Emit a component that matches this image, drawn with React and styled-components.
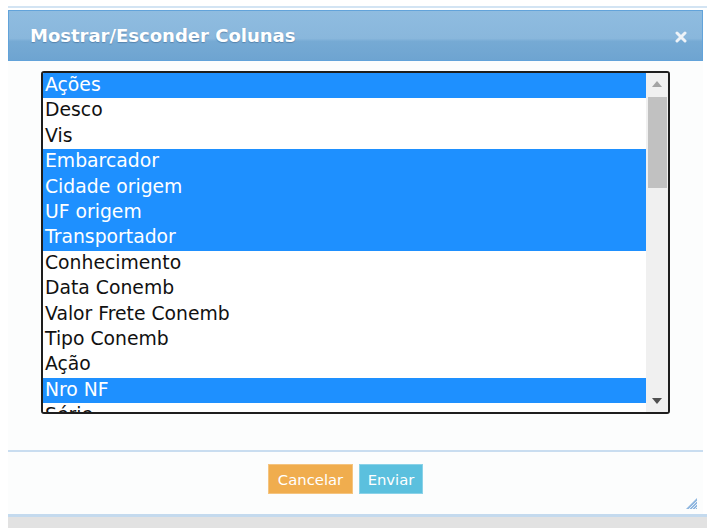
import React from "react";
import styled, { createGlobalStyle } from "styled-components";

const Global = createGlobalStyle`
  html, body { margin: 0; padding: 0; background: #ffffff; }
  body { font-family: "DejaVu Sans", Verdana, sans-serif; }
`;

const Page = styled.div`
  padding: 6px 0 0 8px;
  width: 700px;
`;

const Dialog = styled.div`
  display: flex;
  flex-direction: column;
  width: 699px;
`;

const TopLine = styled.div`
  height: 2px;
  background: #d3e4f3;
  margin-bottom: 2px;
`;

const TitleBar = styled.div`
  display: flex;
  align-items: center;
  justify-content: space-between;
  box-sizing: border-box;
  width: 695px;
  height: 51px;
  padding: 0 15px 0 21px;
  border: 1px solid #62a3da;
  background: linear-gradient(
    to bottom,
    #8fbce0 0%,
    #89b7dc 56%,
    #76aad4 62%,
    #6ea4d1 100%
  );
`;

const Title = styled.h1`
  margin: 0;
  font-family: "DejaVu Sans", Verdana, sans-serif;
  font-weight: bold;
  font-size: 18px;
  color: #ffffff;
  text-shadow: 0 1px 1px rgba(60, 100, 140, 0.55);
`;

const CloseButton = styled.span`
  display: flex;
  width: 12px;
  height: 12px;
  margin-top: 2px;
`;

const Body = styled.div`
  box-sizing: border-box;
  width: 695px;
  height: 389px;
  padding: 10px 0 0 33px;
  background: #fcfdfd;
`;

const ListBox = styled.div`
  box-sizing: border-box;
  width: 629px;
  height: 343px;
  border: 2px solid #1e1e1e;
  border-radius: 3px;
  display: flex;
  background: #ffffff;
  overflow: hidden;
`;

const Items = styled.div`
  flex: 1;
  overflow: hidden;
`;

const Item = styled.div`
  box-sizing: border-box;
  height: 25.4px;
  line-height: 23.4px;
  padding: 0 0 2px 2px;
  font-family: "DejaVu Sans", Verdana, sans-serif;
  font-size: 18.8px;
  white-space: nowrap;
  color: ${(p) => (p.$selected ? "#ffffff" : "#111111")};
  background: ${(p) => (p.$selected ? "#1e90ff" : "#ffffff")};
`;

const ScrollBar = styled.div`
  width: 22px;
  background: #f0f0f0;
  display: flex;
  flex-direction: column;
  align-items: center;
`;

const Arrow = styled.div`
  height: 22px;
  width: 100%;
  display: flex;
  align-items: center;
  justify-content: center;
`;

const Track = styled.div`
  flex: 1;
  width: 100%;
  display: flex;
  flex-direction: column;
  align-items: center;
`;

const Thumb = styled.div`
  width: 19px;
  height: 91px;
  margin-top: 2px;
  background: #c1c1c1;
`;

const Footer = styled.div`
  box-sizing: border-box;
  width: 695px;
  height: 64px;
  border-top: 2px solid #c9ddf0;
  background: #fcfdfd;
  display: flex;
  justify-content: center;
  align-items: flex-start;
  padding: 12px 20px 0 0;
  gap: 6px;
  position: relative;
`;

const Button = styled.button`
  box-sizing: border-box;
  height: 30px;
  width: ${(p) => p.$w}px;
  padding: 0;
  border: 1px solid ${(p) => p.$border};
  background: ${(p) => p.$bg};
  color: #ffffff;
  font-family: "DejaVu Sans", Verdana, sans-serif;
  font-size: 14.8px;
  cursor: pointer;
`;

const Grip = styled.span`
  position: absolute;
  right: 6px;
  bottom: 5px;
  display: flex;
`;

const BottomLine = styled.div`
  width: 699px;
  height: 3px;
  background: #c4daee;
`;

const Grey = styled.div`
  width: 699px;
  height: 11px;
  background: #e2e2e2;
`;

const items = [
  ["Ações", true],
  ["Desco", false],
  ["Vis", false],
  ["Embarcador", true],
  ["Cidade origem", true],
  ["UF origem", true],
  ["Transportador", true],
  ["Conhecimento", false],
  ["Data Conemb", false],
  ["Valor Frete Conemb", false],
  ["Tipo Conemb", false],
  ["Ação", false],
  ["Nro NF", true],
  ["Série", false],
];

export default function App() {
  return (
    <>
      <Global />
      <Page>
        <Dialog>
          <TopLine />
          <TitleBar>
            <Title>Mostrar/Esconder Colunas</Title>
            <CloseButton>
              <svg width="12" height="12" viewBox="0 0 12 12">
                <path
                  d="M2 2 L10 10 M10 2 L2 10"
                  stroke="#eef3f8"
                  strokeWidth="3"
                  strokeLinecap="round"
                />
              </svg>
            </CloseButton>
          </TitleBar>
          <Body>
            <ListBox>
              <Items>
                {items.map(([label, sel]) => (
                  <Item key={label} $selected={sel}>
                    {label}
                  </Item>
                ))}
              </Items>
              <ScrollBar>
                <Arrow>
                  <svg width="10" height="6" viewBox="0 0 10 6">
                    <path d="M0 6 L5 0 L10 6 Z" fill="#a3a3a3" />
                  </svg>
                </Arrow>
                <Track>
                  <Thumb />
                </Track>
                <Arrow>
                  <svg width="10" height="6" viewBox="0 0 10 6">
                    <path d="M0 0 L5 6 L10 0 Z" fill="#505050" />
                  </svg>
                </Arrow>
              </ScrollBar>
            </ListBox>
          </Body>
          <Footer>
            <Button $w={85} $bg="#f0ad4e" $border="#f5c47f">
              Cancelar
            </Button>
            <Button $w={64} $bg="#5bc0de" $border="#8ad2e8">
              Enviar
            </Button>
            <Grip>
              <svg width="11" height="11" viewBox="0 0 11 11">
                <path d="M11 0 L11 11 L0 11 Z" fill="#8fb7e0" />
                <path d="M11 3 L3 11 M11 6 L6 11 M11 9 L9 11" stroke="#fcfdfd" strokeWidth="0.8" />
              </svg>
            </Grip>
          </Footer>
          <BottomLine />
          <Grey />
        </Dialog>
      </Page>
    </>
  );
}
